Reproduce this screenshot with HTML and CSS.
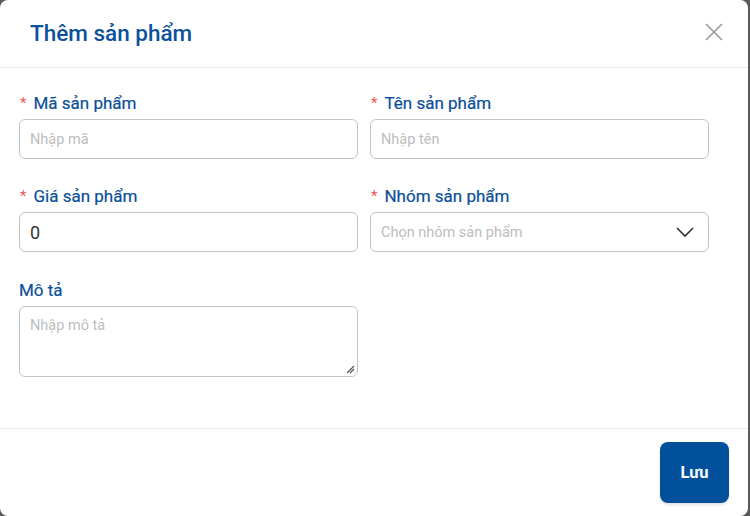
FILE: index.html
```html
<!DOCTYPE html>
<html lang="vi">
<head>
<meta charset="utf-8">
<link rel="stylesheet" href="styles.css">
</head>
<body>
<div class="modal">
  <div class="header">
    <h1 class="title">Thêm sản phẩm</h1>
    <span class="close">
      <svg width="20" height="20" viewBox="0 0 20 20"><path d="M2 2L18 18M18 2L2 18" stroke="#9a9a9a" stroke-width="1.6" fill="none"/></svg>
    </span>
  </div>
  <div class="body">
    <div class="grid">
      <div class="field">
        <label class="label"><span class="req">*</span>Mã sản phẩm</label>
        <div class="input"><span class="ph">Nhập mã</span></div>
      </div>
      <div class="field">
        <label class="label"><span class="req">*</span>Tên sản phẩm</label>
        <div class="input"><span class="ph">Nhập tên</span></div>
      </div>
      <div class="field">
        <label class="label"><span class="req">*</span>Giá sản phẩm</label>
        <div class="input"><span class="val">0</span></div>
      </div>
      <div class="field">
        <label class="label"><span class="req">*</span>Nhóm sản phẩm</label>
        <div class="input select"><span class="ph">Chọn nhóm sản phẩm</span>
          <svg width="18" height="12" viewBox="0 0 18 12"><path d="M1 2L9 10L17 2" stroke="#333" stroke-width="1.6" fill="none"/></svg>
        </div>
      </div>
      <div class="field row3">
        <label class="label">Mô tả</label>
        <div class="textarea"><span class="ph">Nhập mô tả</span>
          <svg class="grip" width="10" height="10" viewBox="0 0 10 10"><path d="M2 9L9 2M5 9L9 5" stroke="#555" stroke-width="1.2" fill="none"/></svg>
        </div>
      </div>
    </div>
  </div>
  <div class="footer">
    <button class="btn">Lưu</button>
  </div>
</div>
</body>
</html>
```
FILE: styles.css
```css
html, body { margin: 0; padding: 0; }
body {
  width: 750px; height: 516px; background: #5a5a5a;
  font-family: Roboto, "Noto Sans", Arial, sans-serif;
  overflow: hidden;
}
.modal {
  width: 748px; height: 516px; background: #fff;
  border-radius: 8px;
  display: flex; flex-direction: column;
  box-sizing: border-box;
}
.header {
  height: 68px; box-sizing: border-box;
  border-bottom: 1px solid #ececec;
  display: flex; align-items: center; justify-content: space-between;
  padding: 0 24px 0 30px;
}
.title {
  margin: 0; font-size: 22.5px; font-weight: 500; color: #0b519c;
  padding-bottom: 2px;
}
.close { display: flex; padding-bottom: 4px; }
.body { flex: 1; padding: 25px 40px 0 19px; }
.grid {
  display: grid; grid-template-columns: 339px 339px;
  column-gap: 12px; row-gap: 27px;
}
.field { display: flex; flex-direction: column; gap: 6px; }
.row3 { margin-top: 1px; }
.label {
  height: 20px; display: flex; align-items: center;
  font-size: 17px; color: #0a4f99; font-weight: 400;
  -webkit-text-stroke: 0.2px #0a4f99;
}
.req { color: #f0535a; margin-right: 7px; font-size: 15px; margin-left: 1px; -webkit-text-stroke: 0; }
.input {
  height: 40px; box-sizing: border-box;
  border: 1px solid #c4c4c4; border-radius: 6px;
  display: flex; align-items: center; padding: 0 10px;
}
.select { justify-content: space-between; padding-right: 14px; }
.ph { font-size: 14.5px; color: #bdbdbd; }
.val { font-size: 18px; color: #333; }
.textarea {
  height: 71px; box-sizing: border-box;
  border: 1px solid #c4c4c4; border-radius: 6px;
  padding: 8px 10px; position: relative;
}
.grip { position: absolute; right: 2px; bottom: 2px; }
.footer {
  height: 88px; box-sizing: border-box;
  border-top: 1px solid #ececec;
  display: flex; justify-content: flex-end; align-items: flex-start;
  padding: 13px 19px 0 0;
}
.btn {
  width: 69px; height: 61px; border: none; border-radius: 8px;
  background: #00509c; color: #fff;
  font-family: Roboto, Arial, sans-serif; font-size: 16.5px; font-weight: 700;
  box-shadow: 0 2px 3px rgba(0,0,0,0.12);
}
```
